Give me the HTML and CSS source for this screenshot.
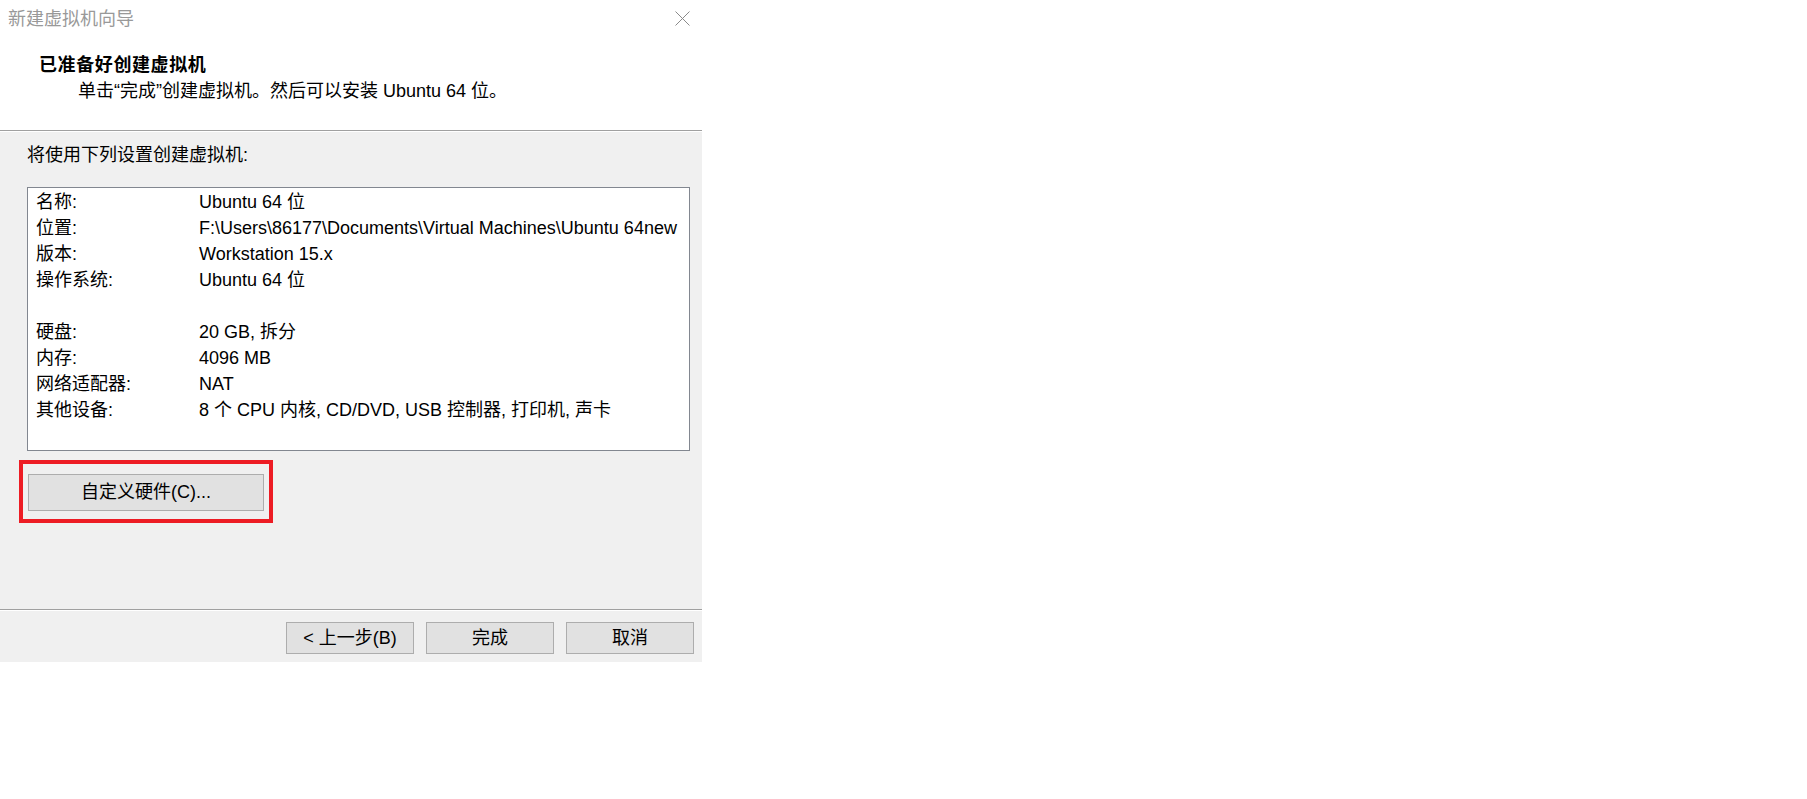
FILE: index.html
```html
<!DOCTYPE html>
<html lang="zh-CN">
<head>
    <meta charset="UTF-8">
    <title>新建虚拟机向导</title>
    <link rel="stylesheet" href="styles.css">
</head>
<body>

<div class="dialog">
    <div class="titlebar">
        <span class="title">新建虚拟机向导</span>
        <svg class="close" width="15" height="15" viewBox="0 0 15 15">
            <path d="M0.5 0.5 L14.5 14.5 M14.5 0.5 L0.5 14.5" stroke="#8a8a8a" stroke-width="1" fill="none"/>
        </svg>
    </div>

    <div class="header">
        <div class="heading">已准备好创建虚拟机</div>
        <div class="subheading">单击“完成”创建虚拟机。然后可以安装 Ubuntu 64 位。</div>
    </div>

    <div class="content">
        <div class="intro">将使用下列设置创建虚拟机:</div>

        <div class="summary">
            <div class="label">名称:</div><div class="value">Ubuntu 64 位</div>
            <div class="label">位置:</div><div class="value">F:\Users\86177\Documents\Virtual Machines\Ubuntu 64new</div>
            <div class="label">版本:</div><div class="value">Workstation 15.x</div>
            <div class="label">操作系统:</div><div class="value">Ubuntu 64 位</div>
            <div class="spacer"></div>
            <div class="label">硬盘:</div><div class="value">20 GB, 拆分</div>
            <div class="label">内存:</div><div class="value">4096 MB</div>
            <div class="label">网络适配器:</div><div class="value">NAT</div>
            <div class="label">其他设备:</div><div class="value">8 个 CPU 内核, CD/DVD, USB 控制器, 打印机, 声卡</div>
        </div>

        <div class="highlight">
            <button type="button" class="btn btn-custom">自定义硬件(C)...</button>
        </div>
    </div>

    <div class="footer">
        <button type="button" class="btn">&lt; 上一步(B)</button>
        <button type="button" class="btn">完成</button>
        <button type="button" class="btn">取消</button>
    </div>
</div>

</body>
</html>
```

FILE: styles.css
```css
body {
    margin: 0;
    background-color: #fff;
    font-family: "Liberation Sans", "Noto Sans CJK SC", sans-serif;
    font-size: 18px;
    color: #000;
}
.dialog {
    width: 702px;
}
.titlebar {
    height: 38px;
    display: flex;
    align-items: center;
    justify-content: space-between;
    padding: 0 12px 0 8px;
}
.title {
    color: #999;
    line-height: 26px;
}
.close {
    display: block;
    margin-top: -1px;
}
.header {
    height: 78px;
    padding: 14px 0 0 39px;
    border-bottom: 1px solid #a0a0a0;
}
.heading {
    font-weight: bold;
    line-height: 26px;
    letter-spacing: 0.6px;
}
.subheading {
    margin-left: 39px;
    line-height: 26px;
}
.content {
    height: 467px;
    background-color: #f0f0f0;
    border-top: 1px solid #fff;
    padding: 10px 12px 0 27px;
}
.intro {
    line-height: 26px;
}
.summary {
    margin-top: 19px;
    height: 261px;
    padding: 1px 0 0 8px;
    background-color: #fff;
    border: 1px solid #828790;
    display: grid;
    grid-template-columns: 163px 1fr;
    grid-auto-rows: 26px;
    align-content: start;
}
.label, .value {
    line-height: 26px;
    white-space: nowrap;
}
.spacer {
    grid-column: 1 / 3;
}
.highlight {
    position: relative;
    width: 236px;
    margin: 23px 0 0 1px;
}
.highlight::after {
    content: "";
    position: absolute;
    top: -14px;
    left: -9px;
    right: -9px;
    bottom: -12px;
    border: 4px solid #ed1c24;
}
.btn {
    font-family: inherit;
    font-size: 18px;
    color: #000;
    background-color: #e1e1e1;
    border: 1px solid #adadad;
    border-radius: 0;
    padding: 0;
    width: 128px;
    height: 32px;
    line-height: 30px;
}
.btn-custom {
    display: block;
    width: 236px;
    height: 37px;
    line-height: 35px;
}
.footer {
    height: 40px;
    background-color: #f0f0f0;
    border-top: 1px solid #a0a0a0;
    box-shadow: inset 0 1px 0 #fff;
    padding: 12px 8px 0 0;
    display: flex;
    justify-content: flex-end;
    align-items: flex-start;
    gap: 12px;
}
```
